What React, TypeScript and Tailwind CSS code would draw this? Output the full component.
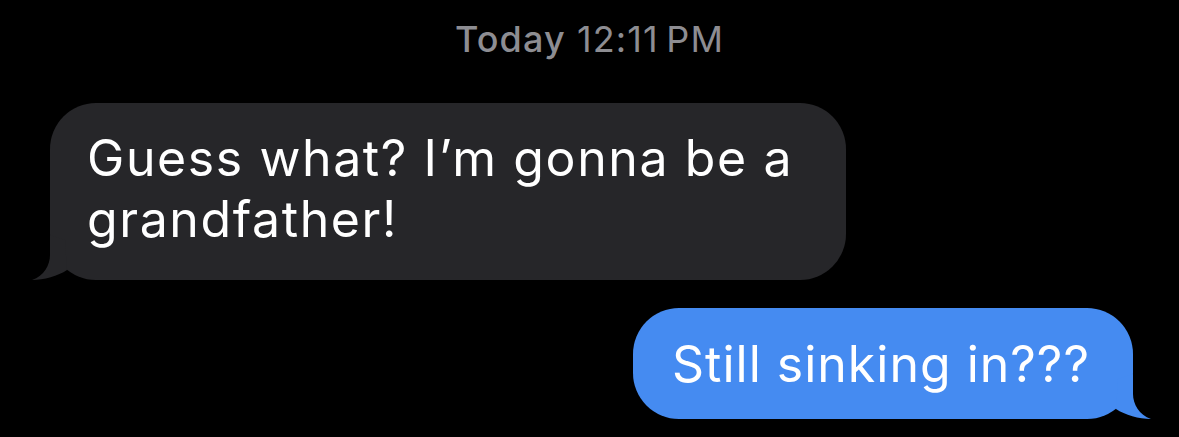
import React from "react";

const font = { fontFamily: "Inter, 'Noto Sans', sans-serif" };

function Tail({ color, side }: { color: string; side: "left" | "right" }) {
  return (
    <svg
      width="50"
      height="50"
      viewBox="0 0 50 50"
      className={
        side === "left"
          ? "absolute bottom-0 left-[-20px]"
          : "absolute bottom-0 right-[-20px] scale-x-[-1]"
      }
    >
      <path d="M20 5 L20 25 C20 35 14 46 2 50 C14 50 28 46 37 40 L35 10 Z" fill={color} />
    </svg>
  );
}

export default function App() {
  return (
    <div className="flex h-[437px] w-[1179px] flex-col overflow-hidden bg-black" style={font}>
      <div className="pt-[17px] text-center text-[36px] leading-[44px] tracking-[1.1px] text-[#8d8d92]">
        <span className="font-medium">Today</span> 12:11&#8201;PM
      </div>

      <div className="relative ml-[50px] mt-[42px] w-[796px] self-start rounded-[46px] bg-[#262629] pb-[30px] pl-[37px] pr-[30px] pt-[25px]">
        <p className="text-[50px] leading-[61px] tracking-[1.6px] text-white">Guess what? I’m gonna be a grandfather!</p>
        <Tail color="#262629" side="left" />
      </div>

      <div className="relative mr-[46px] mt-[28px] self-end rounded-[46px] bg-[#458bf1] pb-[24px] pl-[39px] pr-[43px] pt-[26px]">
        <p className="text-[50px] leading-[61px] tracking-[1px] text-white">Still sinking in???</p>
        <Tail color="#458bf1" side="right" />
      </div>
    </div>
  );
}
